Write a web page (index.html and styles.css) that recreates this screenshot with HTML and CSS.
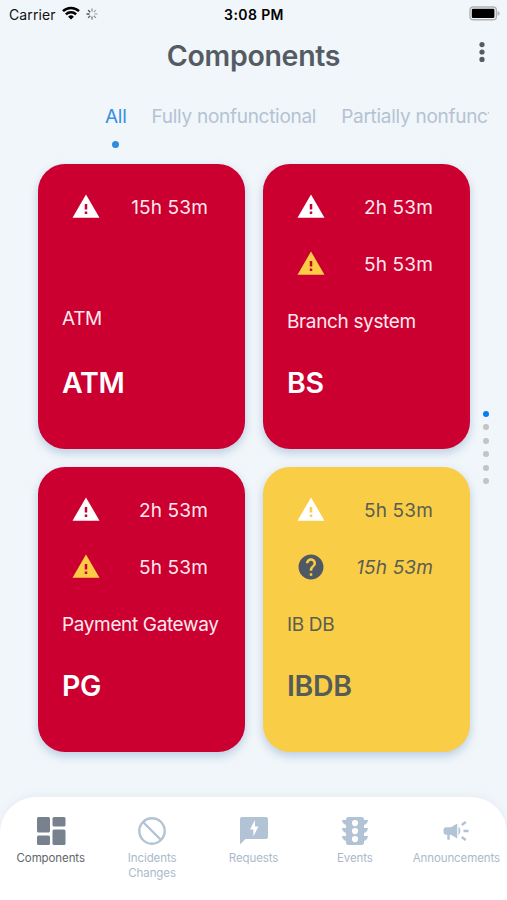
FILE: index.html
```html
<!DOCTYPE html>
<html lang="en">
<head>
  <meta charset="utf-8">
  <title>Components</title>
  <link rel="stylesheet" href="styles.css">
</head>
<body>
  <!-- Shared icons -->
  <svg class="sprite">
    <symbol id="warning" viewBox="0 0 24 24">
      <path d="M1.200 20.500h21.600L12 2 1.200 20.500zm11.800-3h-2v-2h2v2zm0-3.500h-2v-4.500h2v4.500z"/>
    </symbol>
    <symbol id="help" viewBox="0 0 24 24">
      <path d="M12 2C6.48 2 2 6.48 2 12s4.48 10 10 10 10-4.48 10-10S17.52 2 12 2zm1 17h-2v-2h2v2zm2.07-7.75l-.9.92C13.45 12.9 13 13.5 13 15h-2v-.5c0-1.1.45-2.1 1.17-2.83l1.24-1.26c.37-.36.59-.86.59-1.41 0-1.1-.9-2-2-2s-2 .9-2 2H8c0-2.21 1.79-4 4-4s4 1.79 4 4c0 .88-.36 1.68-.93 2.25z"/>
    </symbol>
  </svg>

  <div class="status-bar">
    <div class="carrier">
      <span>Carrier</span>
      <svg class="wifi" viewBox="0 0 18 14">
        <path d="M1 5.2a11.4 11.4 0 0 1 16 0M3.9 8.4a7.3 7.3 0 0 1 10.2 0"/>
        <path class="wifi-base" d="M6.1 10.700a4.200 4.200 0 0 1 5.800 0L9 13.6z"/>
      </svg>
      <svg class="spinner" viewBox="0 0 12 12">
        <path d="M6 .5v3" opacity=".45"/>
        <path d="M9.9 2.1L7.8 4.2" opacity=".35"/>
        <path d="M11.5 6h-3" opacity=".35"/>
        <path d="M9.9 9.9L7.8 7.8" opacity=".45"/>
        <path d="M6 11.5v-3" opacity=".6"/>
        <path d="M2.1 9.9l2.1-2.1" opacity=".75"/>
        <path d="M.5 6h3" opacity=".9"/>
        <path d="M2.1 2.1l2.1 2.1" opacity=".8"/>
      </svg>
    </div>
    <div class="time">3:08 PM</div>
    <svg class="battery" viewBox="0 0 31 15">
      <rect class="battery-case" x="1" y="1" width="26.4" height="12.8" rx="3.4"/>
      <rect x="2.800" y="2.800" width="22.600" height="9.2" rx="1.2"/>
      <path class="battery-tip" d="M28.6 5v4.8q2-.8 2-2.4t-2-2.4z"/>
    </svg>
  </div>

  <div class="header">
    <h1>Components</h1>
    <svg class="more" viewBox="0 0 6 20">
      <circle cx="3" cy="2.6" r="2.6"/>
      <circle cx="3" cy="10" r="2.6"/>
      <circle cx="3" cy="17.4" r="2.6"/>
    </svg>
  </div>

  <div class="tabs">
    <div class="tab active">All</div>
    <div class="tab">Fully nonfunctional</div>
    <div class="tab">Partially nonfunctional</div>
  </div>

  <div class="content">
    <div class="cards">
      <div class="card">
        <div class="alerts">
          <div class="alert"><svg><use href="#warning"/></svg><span>15h 53m</span></div>
        </div>
        <div class="name raised">ATM</div>
        <div class="code">ATM</div>
      </div>

      <div class="card">
        <div class="alerts">
          <div class="alert"><svg><use href="#warning"/></svg><span>2h 53m</span></div>
          <div class="alert minor"><svg><use href="#warning"/></svg><span>5h 53m</span></div>
        </div>
        <div class="name">Branch system</div>
        <div class="code">BS</div>
      </div>

      <div class="card">
        <div class="alerts">
          <div class="alert"><svg><use href="#warning"/></svg><span>2h 53m</span></div>
          <div class="alert minor"><svg><use href="#warning"/></svg><span>5h 53m</span></div>
        </div>
        <div class="name">Payment Gateway</div>
        <div class="code">PG</div>
      </div>

      <div class="card yellow">
        <div class="alerts">
          <div class="alert"><svg><use href="#warning"/></svg><span>5h 53m</span></div>
          <div class="alert unknown"><svg><use href="#help"/></svg><span>15h 53m</span></div>
        </div>
        <div class="name">IB DB</div>
        <div class="code">IBDB</div>
      </div>
    </div>

    <div class="pager">
      <i class="current"></i><i></i><i></i><i></i><i></i><i></i>
    </div>
  </div>

  <div class="nav">
    <div class="nav-item active">
      <svg viewBox="0 0 30 30">
        <rect x="1" y="1" width="13" height="15.5" rx="1.5"/>
        <rect x="16.5" y="1" width="13" height="9.5" rx="1.5"/>
        <rect x="1" y="19.5" width="13" height="9.5" rx="1.5"/>
        <rect x="16.5" y="13.5" width="13" height="15.5" rx="1.5"/>
      </svg>
      <span>Components</span>
    </div>
    <div class="nav-item">
      <svg class="line" viewBox="0 0 30 30">
        <circle cx="15" cy="15" r="12.7"/>
        <path d="M6 6l18 18"/>
      </svg>
      <span>Incidents<br>Changes</span>
    </div>
    <div class="nav-item">
      <svg viewBox="0 0 30 30">
        <path fill-rule="evenodd" d="M3 1h24a2 2 0 0 1 2 2v18a2 2 0 0 1-2 2H6.5L1 28.5V3a2 2 0 0 1 2-2zM16 4L11 13.5h3.4V20.500l5-10H16z"/>
      </svg>
      <span>Requests</span>
    </div>
    <div class="nav-item">
      <svg viewBox="0 0 30 30">
        <path fill-rule="evenodd" d="M8.500 1h13a2.500 2.500 0 0 1 2.500 2.500V4h4q-.5 4-4 5v3h4q-.5 4-4 5v3h4q-.5 4-4 5v1.500a2.500 2.500 0 0 1-2.500 2.500h-13A2.500 2.500 0 0 1 6 26.500V25q-3.500-1-4-5h4v-3q-3.500-1-4-5h4V9q-3.500-1-4-5h4v-.5A2.500 2.500 0 0 1 8.500 1zM15 4a3.100 3.100 0 1 0 0 6.200A3.100 3.100 0 0 0 15 4zM15 12a3.100 3.100 0 1 0 0 6.200A3.100 3.100 0 0 0 15 12zM15 20a3.100 3.100 0 1 0 0 6.200A3.100 3.100 0 0 0 15 20z"/>
      </svg>
      <span>Events</span>
    </div>
    <div class="nav-item">
      <svg viewBox="0 0 24 24">
        <path d="M18 11v2h4v-2h-4zM16 17.61c.96.71 2.21 1.65 3.2 2.39.4-.53.8-1.07 1.2-1.6-.99-.74-2.24-1.68-3.2-2.4-.4.54-.8 1.08-1.2 1.61zM20.4 5.6c-.4-.53-.8-1.07-1.2-1.6-.99.74-2.24 1.68-3.2 2.4.4.53.8 1.07 1.2 1.6.96-.72 2.21-1.65 3.2-2.4zM4 9c-1.1 0-2 .9-2 2v2c0 1.1.9 2 2 2h1v4h2v-4h1l5 3V6L8 9H4zM15.5 12c0-1.33-.58-2.53-1.5-3.35v6.69c.92-.81 1.5-2.01 1.5-3.34z"/>
      </svg>
      <span>Announcements</span>
    </div>
  </div>
</body>
</html>
```

FILE: styles.css
```css
body {
  margin: 0;
  height: 900px;
  display: flex;
  flex-direction: column;
  overflow: hidden;
  background: #f1f6fa;
  color: #555b63;
  font-family: Inter, "Liberation Sans", sans-serif;
}
.sprite {
  display: none;
}

/* Status bar */
.status-bar {
  display: grid;
  grid-template-columns: 1fr auto 1fr;
  align-items: center;
  height: 28px;
  padding: 0 7px 0 9px;
  box-sizing: border-box;
  color: #111;
  font-size: 14px;
}
.carrier {
  display: flex;
  align-items: center;
  letter-spacing: 0.1px;
}
.wifi {
  width: 18px;
  height: 14px;
  margin: 0 0 2px 6px;
  fill: none;
  stroke: #000;
  stroke-width: 2.5;
}
.wifi-base {
  fill: #000;
  stroke: none;
}
.spinner {
  width: 12px;
  height: 12px;
  margin: 0 0 1px 6px;
  stroke: #222;
  stroke-width: 1.3;
}
.time {
  margin-right: 1px;
  color: #000;
  font-weight: 600;
  letter-spacing: 0.4px;
}
.battery {
  width: 31px;
  height: 15px;
  margin-bottom: 2px;
  justify-self: end;
}
.battery-case {
  fill: none;
  stroke: #b0b2b5;
  stroke-width: 1.4;
}
.battery-tip {
  fill: #b0b2b5;
}

/* Header */
.header {
  display: grid;
  grid-template-columns: 1fr auto 1fr;
  align-items: center;
  height: 56px;
  padding-right: 22px;
}
h1 {
  grid-column: 2;
  margin: 0 0 0 22px;
  font-size: 28.5px;
  font-weight: 600;
  line-height: 56px;
  letter-spacing: -0.3px;
}
.more {
  width: 6px;
  height: 20px;
  margin-bottom: 8px;
  justify-self: end;
  fill: #555b63;
}

/* Tabs */
.tabs {
  display: flex;
  gap: 25px;
  height: 65px;
  margin: 15px 18px 0 105px;
  overflow: hidden;
  color: #b4c2d3;
  font-size: 19px;
  letter-spacing: -0.28px;
  line-height: 36px;
  white-space: nowrap;
}
.tab.active {
  color: #348fe2;
}
.tab.active::after {
  content: "";
  display: block;
  width: 7px;
  height: 7px;
  margin: 6px auto 0;
  border-radius: 50%;
  background: #2f8de0;
}

/* Cards */
.content {
  display: flex;
  align-items: center;
  flex: 1;
}
.cards {
  display: grid;
  grid-template-columns: 207px 207px;
  grid-auto-rows: 285px;
  gap: 18px;
  align-self: flex-start;
  margin-left: 38px;
}
.card {
  display: flex;
  flex-direction: column;
  padding: 14px 24px;
  box-sizing: border-box;
  border-radius: 27px;
  background: #cb0030;
  box-shadow: 0 4px 10px rgba(120, 155, 195, 0.45);
  color: #ffe9ee;
  font-size: 19px;
}
.alerts {
  height: 114px;
}
.alert {
  display: flex;
  align-items: center;
  justify-content: space-between;
  height: 57px;
  padding: 0 13px 0 9px;
}
.alert span {
  padding-top: 2px;
  letter-spacing: 0.15px;
}
.alert svg {
  width: 30px;
  height: 30px;
  fill: #fff;
}
.alert.minor svg {
  fill: #fbcd45;
}
.alert.unknown svg {
  fill: #505863;
}
.alert.unknown span {
  font-style: italic;
}
.name {
  height: 58px;
  line-height: 59px;
  letter-spacing: -0.36px;
  white-space: nowrap;
}
.name.raised {
  height: 54px;
  margin-bottom: 4px;
  line-height: 54px;
}
.code {
  color: #fff;
  font-size: 28.5px;
  font-weight: 600;
  line-height: 66px;
  letter-spacing: -0.3px;
}
.card.yellow {
  background: #f9ce46;
  color: #5b5d53;
}
.card.yellow .code {
  color: #555b58;
}

/* Page dots */
.pager {
  display: flex;
  flex-direction: column;
  gap: 7.4px;
  margin: 0 0 66px 12.5px;
}
.pager i {
  width: 6px;
  height: 6px;
  border-radius: 50%;
  background: #c2c4c6;
}
.pager .current {
  background: #087cf5;
}

/* Bottom navigation */
.nav {
  display: flex;
  height: 103px;
  padding-top: 19px;
  box-sizing: border-box;
  border-radius: 36px 36px 0 0;
  background: #fff;
  box-shadow: 0 -2px 8px rgba(160, 180, 200, 0.12);
}
.nav-item {
  display: flex;
  flex-direction: column;
  align-items: center;
  flex: 1 0 0;
  min-width: 0;
  color: #abb9cb;
  font-size: 11.5px;
  letter-spacing: -0.1px;
  line-height: 15px;
  text-align: center;
}
.nav-item svg {
  width: 30px;
  height: 30px;
  margin-bottom: 5px;
  fill: #b1c3d4;
}
.nav-item .line {
  fill: none;
  stroke: #b1c3d4;
  stroke-width: 2.4;
}
.nav-item.active {
  color: #60666d;
}
.nav-item.active svg {
  fill: #78828e;
}
```
